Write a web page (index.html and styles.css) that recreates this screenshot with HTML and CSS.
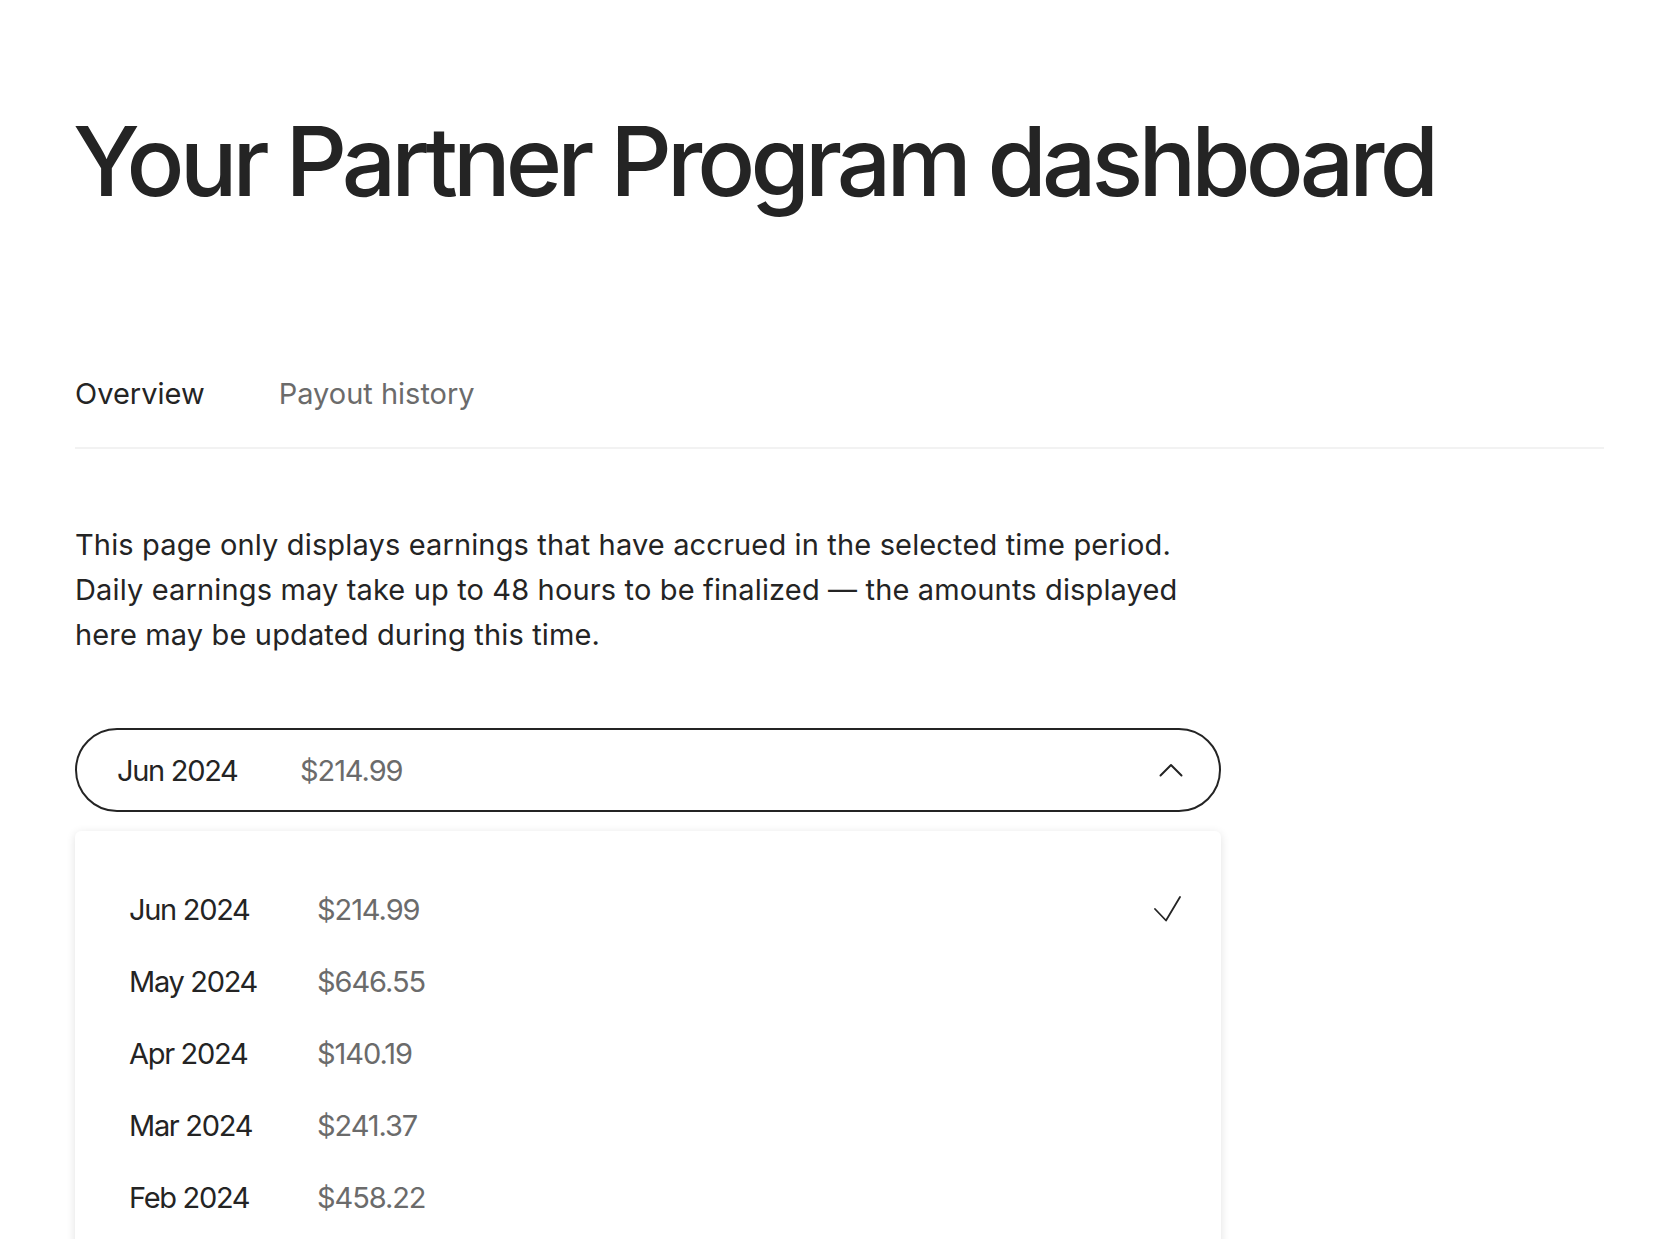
FILE: index.html
```html
<!DOCTYPE html>
<html lang="en">
<head>
<meta charset="utf-8">
<title>Partner Program dashboard</title>
<link rel="stylesheet" href="styles.css">
</head>
<body>
<main class="page">
  <h1 class="title">Your Partner Program dashboard</h1>

  <nav class="tabs">
    <a class="tab tab-active">Overview</a>
    <a class="tab">Payout history</a>
  </nav>

  <p class="notice">This page only displays earnings that have accrued in the selected time period. Daily earnings may take up to 48 hours to be finalized — the amounts displayed here may be updated during this time.</p>

  <div class="select">
    <button class="select-button">
      <span class="month">Jun 2024</span>
      <span class="amount">$214.99</span>
      <svg class="chevron" width="24" height="14" viewBox="0 0 24 14" fill="none" stroke="#242424" stroke-width="2" stroke-linecap="round" stroke-linejoin="round"><polyline points="1.5,12.5 12,2 22.5,12.5"/></svg>
    </button>

    <ul class="menu">
      <li class="menu-item">
        <span class="month">Jun 2024</span>
        <span class="amount">$214.99</span>
        <svg class="check" width="28" height="28" viewBox="0 0 28 28" fill="none" stroke="#242424" stroke-width="1.8" stroke-linecap="round" stroke-linejoin="round"><polyline points="2,14 13,25.5 27,2"/></svg>
      </li>
      <li class="menu-item"><span class="month">May 2024</span><span class="amount">$646.55</span></li>
      <li class="menu-item"><span class="month">Apr 2024</span><span class="amount">$140.19</span></li>
      <li class="menu-item"><span class="month">Mar 2024</span><span class="amount">$241.37</span></li>
      <li class="menu-item"><span class="month">Feb 2024</span><span class="amount">$458.22</span></li>
    </ul>
  </div>
</main>
</body>
</html>
```

FILE: styles.css
```css
html {
  overflow: hidden;
}

html, body {
  margin: 0;
  padding: 0;
  background: #ffffff;
}

body {
  font-family: Inter, "Liberation Sans", Arial, sans-serif;
  color: #242424;
}

.page {
  padding: 0 66px 0 75px;
}

.title {
  margin: 104px 0 0 -2px;
  font-size: 96px;
  line-height: 115px;
  font-weight: 500;
  letter-spacing: -0.051em;
  color: #242424;
}

.tabs {
  display: flex;
  gap: 74px;
  margin-top: 153px;
  padding-bottom: 31px;
  border-bottom: 2px solid #f2f2f2;
}

.tab {
  font-size: 29px;
  line-height: 44px;
  color: #6b6b6b;
  text-decoration: none;
}

.tab-active {
  color: #242424;
}

.notice {
  max-width: 1115px;
  margin: 73px 0 0;
  font-size: 29px;
  line-height: 45px;
  letter-spacing: 0.005em;
  color: #242424;
}

.select {
  width: 1146px;
  margin-top: 71px;
}

.select-button {
  display: flex;
  align-items: center;
  width: 100%;
  height: 84px;
  padding: 0 36px 0 40px;
  box-sizing: border-box;
  border: 2px solid #242424;
  border-radius: 42px;
  background: #ffffff;
  font-family: inherit;
  font-size: 29px;
  color: #242424;
  text-align: left;
}

.select-button .month {
  width: 183px;
}

.select-button .chevron {
  margin-left: auto;
}

.month {
  color: #242424;
  letter-spacing: -0.045em;
}

.amount {
  color: #6b6b6b;
  letter-spacing: -0.037em;
}

.menu {
  margin: 19px 0 0;
  padding: 42px 40px 40px 54px;
  list-style: none;
  background: #ffffff;
  border-radius: 6px;
  box-shadow: 0 2px 10px rgba(0, 0, 0, 0.12);
}

.menu-item {
  display: flex;
  align-items: center;
  padding: 13.5px 0;
  font-size: 29px;
  line-height: 45px;
}

.menu-item .month {
  width: 188px;
}

.menu-item .check {
  margin-left: auto;
}
```
